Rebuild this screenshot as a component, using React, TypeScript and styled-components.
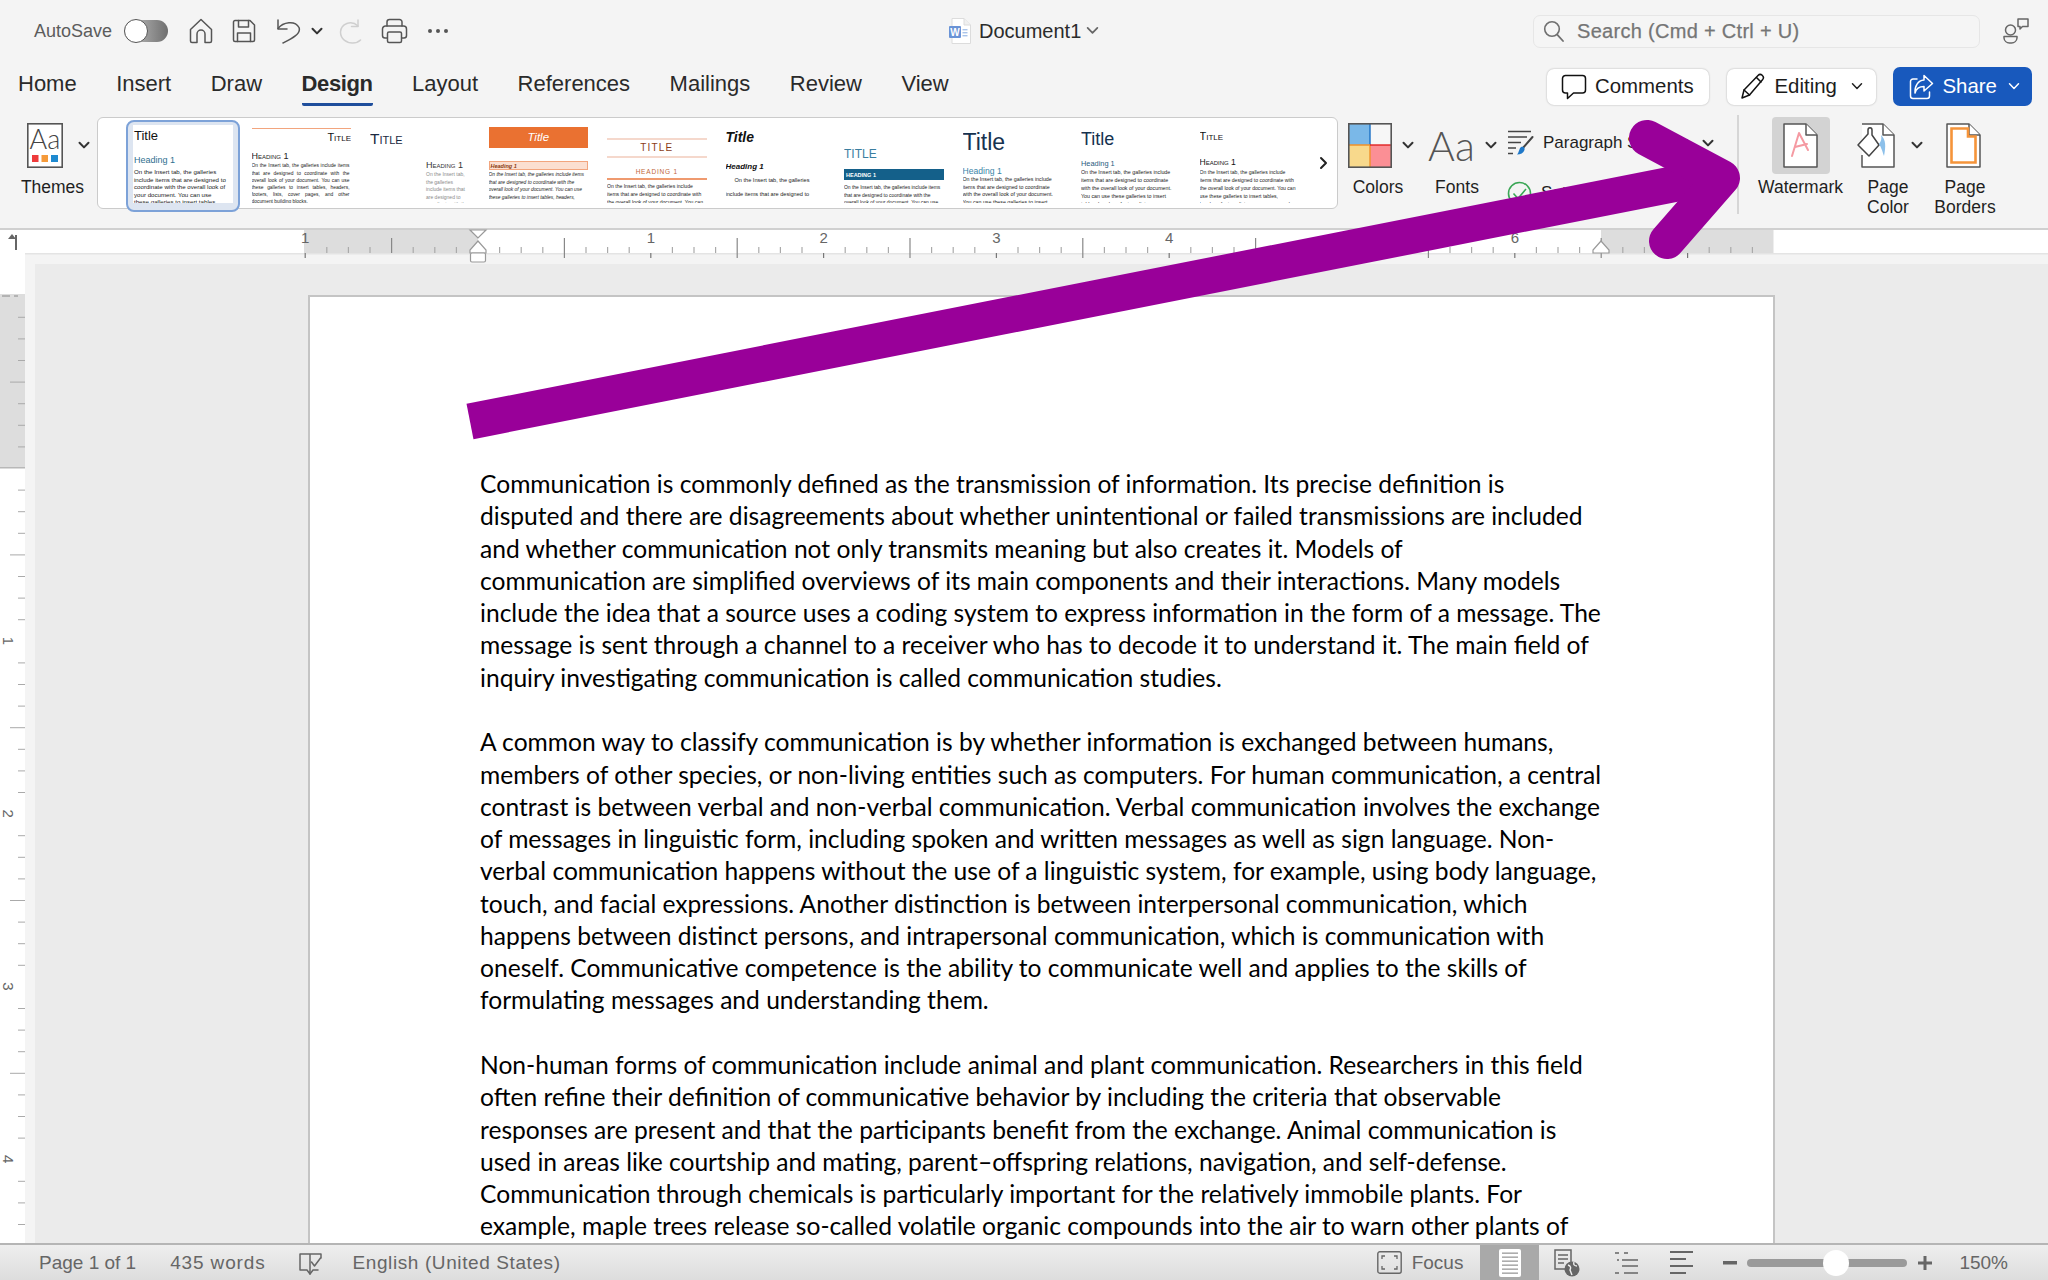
import React from "react";
import styled, { createGlobalStyle } from "styled-components";

const Global = createGlobalStyle`
  html, body { margin: 0; padding: 0; background: #f4f4f4; overflow: hidden; }
  * { box-sizing: border-box; }
`;

const UI = `"Liberation Sans", Arial, sans-serif`;

const App_ = styled.div`
  position: relative;
  width: 2048px;
  height: 1280px;
  overflow: hidden;
  display: flex;
  flex-direction: column;
  background: #f4f4f4;
  font-family: ${UI};
  color: #222;
`;

/* ---------- title bar ---------- */
const TitleBar = styled.header`
  height: 62px;
  flex: none;
  display: flex;
  align-items: center;
  padding: 0 0 0 34px;
`;
const QuickAccess = styled.div`
  width: 915px;
  flex: none;
  display: flex;
  align-items: center;
`;
const AutoSave = styled.span`
  font-size: 18px;
  color: #5c5c5c;
  width: 80px;
  white-space: nowrap;
`;
const Toggle = styled.span`
  width: 44px;
  height: 22px;
  margin-left: 10px;
  border-radius: 11px;
  background: linear-gradient(90deg, #c8c8c8, #6f6f6f);
  display: flex;
  align-items: center;
  flex: none;
  &::before {
    content: "";
    width: 22px;
    height: 22px;
    border-radius: 50%;
    background: #fff;
    border: 1.5px solid #555;
  }
`;
const Slot = styled.span<{ $ml: number }>`
  display: flex;
  flex: none;
  margin-left: ${(p) => p.$ml}px;
`;
const DocTitle = styled.div`
  display: flex;
  align-items: center;
  font-size: 20px;
  color: #2b2b2b;
  width: 584px;
  flex: none;
  gap: 8px;
`;
const SearchBox = styled.div`
  width: 447px;
  height: 33px;
  flex: none;
  display: flex;
  align-items: center;
  gap: 13px;
  padding-left: 9px;
  border: 1px solid #e6e6e6;
  border-radius: 7px;
  background: #f5f5f5;
  font-size: 20px;
  letter-spacing: 0.3px;
  color: #757575;
  -webkit-text-stroke: 0.25px #757575;
`;
const PersonSlot = styled.span`
  display: flex;
  margin-left: 23px;
`;

/* ---------- tabs ---------- */
const TabRow = styled.nav`
  height: 50px;
  flex: none;
  display: flex;
  align-items: flex-start;
  padding: 0 16px 0 18px;
`;
const Tabs = styled.div`
  display: flex;
  gap: 39.5px;
`;
const Tab = styled.span<{ $active?: boolean }>`
  padding: 4px 0 1px;
  line-height: 36px;
  font-size: 22px;
  font-weight: ${(p) => (p.$active ? 700 : 400)};
  letter-spacing: ${(p) => (p.$active ? -0.4 : 0)}px;
  color: #2a2a2a;
  border-bottom: 3px solid ${(p) => (p.$active ? "#1f4e9c" : "transparent")};
  border-radius: 0 0 2px 2px;
`;
const Actions = styled.div`
  margin-left: auto;
  display: flex;
  align-items: center;
  gap: 17.5px;
  padding-top: 5px;
`;
const ActionButton = styled.button<{ $w: number; $primary?: boolean }>`
  width: ${(p) => p.$w}px;
  height: ${(p) => (p.$primary ? 39 : 36)}px;
  display: flex;
  align-items: center;
  gap: 8.5px;
  padding: 0 0 0 ${(p) => (p.$primary ? 16 : 13.5)}px;
  border: none;
  border-radius: 7px;
  font: 20.4px ${UI};
  white-space: nowrap;
  color: ${(p) => (p.$primary ? "#fff" : "#1c1c1c")};
  background: ${(p) => (p.$primary ? "#1859bd" : "#fff")};
  box-shadow: ${(p) => (p.$primary ? "none" : "0 0 2px rgba(0,0,0,.3)")};
  svg { flex: none; }
`;

/* ---------- ribbon ---------- */
const Ribbon = styled.section`
  height: 116px;
  flex: none;
  display: flex;
  align-items: flex-start;
  padding-left: 20px;
`;
const RibbonItem = styled.div<{ $w: number; $ml?: number }>`
  width: ${(p) => p.$w}px;
  margin-left: ${(p) => p.$ml ?? 0}px;
  flex: none;
  display: flex;
  flex-direction: column;
  align-items: center;
`;
const IconRow = styled.div<{ $pad?: number; $selected?: boolean }>`
  align-self: ${(p) => (p.$selected ? "center" : "stretch")};
  width: ${(p) => (p.$selected ? "58px" : "auto")};
  height: 57px;
  margin-top: 5px;
  padding-left: ${(p) => p.$pad ?? 0}px;
  display: flex;
  align-items: center;
  justify-content: ${(p) => (p.$selected ? "center" : "flex-start")};
  border-radius: 4px;
  background: ${(p) => (p.$selected ? "#d3d3d3" : "transparent")};
  svg { flex: none; }
`;
const Label = styled.div`
  margin-top: 4px;
  font-size: 17.5px;
  line-height: 19.5px;
  text-align: center;
  color: #1f1f1f;
  white-space: nowrap;
`;
const Chev = styled.span<{ $ml: number }>`
  display: flex;
  margin-left: ${(p) => p.$ml}px;
  flex: none;
`;
const FontsGlyph = styled.span`
  font-family: "Lato", sans-serif;
  font-weight: 300;
  font-size: 41px;
  line-height: 50px;
  color: #555;
  flex: none;
`;
const ParaGroup = styled.div`
  width: 220px;
  margin-left: 20px;
  margin-right: 10px;
  flex: none;
  padding-top: 18px;
  display: flex;
  flex-direction: column;
  gap: 24px;
`;
const ParaRow = styled.div`
  height: 26px;
  display: flex;
  align-items: center;
  gap: 9px;
  font-size: 17px;
  color: #1f1f1f;
  white-space: nowrap;
  svg { flex: none; }
`;
const RibbonDivider = styled.div`
  width: 2px;
  height: 99px;
  margin-top: 3px;
  flex: none;
  background: #d6d6d6;
`;

/* ---------- style gallery ---------- */
const Gallery = styled.div`
  width: 1241px;
  height: 92px;
  margin: 5px 0 0 12px;
  flex: none;
  position: relative;
  display: flex;
  gap: 19px;
  padding: 7px 0 0 35px;
  background: #fff;
  border: 1.5px solid #cbcbcb;
  border-radius: 6px;
  font-family: ${UI};
`;
const ThumbCell = styled.div<{ $selected?: boolean }>`
  position: relative;
  width: 99.5px;
  flex: none;
  &::before {
    content: ${(p) => (p.$selected ? '""' : "none")};
    position: absolute;
    inset: -5px -7px -4px -7px;
    background: #dde5f1;
    border: 2px solid #7da2d8;
    border-radius: 8px;
  }
`;
const Thumb = styled.div<{ $selected?: boolean }>`
  position: relative;
  height: 78px;
  overflow: hidden;
  background: #fff;
  padding-left: ${(p) => (p.$selected ? 1 : 0)}px;
`;
const ThumbTitle = styled.div<{
  $size: number; $lh: number; $mt: number; $color?: string; $align?: string;
  $italic?: boolean; $bold?: boolean; $caps?: boolean; $spacing?: number; $pl?: number;
}>`
  font-size: ${(p) => p.$size}px;
  line-height: ${(p) => p.$lh}px;
  margin-top: ${(p) => p.$mt}px;
  padding-left: ${(p) => p.$pl ?? 0}px;
  color: ${(p) => p.$color ?? "#111"};
  text-align: ${(p) => p.$align ?? "left"};
  font-style: ${(p) => (p.$italic ? "italic" : "normal")};
  font-weight: ${(p) => (p.$bold ? 700 : 400)};
  font-variant: ${(p) => (p.$caps ? "small-caps" : "normal")};
  letter-spacing: ${(p) => p.$spacing ?? 0}px;
  white-space: nowrap;
`;
const ThumbBody = styled.div<{
  $size?: number; $lh: number; $mt: number; $color?: string; $italic?: boolean;
  $justify?: boolean; $pl?: number; $indent?: number; $w?: number;
}>`
  font-size: ${(p) => p.$size ?? 5.5}px;
  line-height: ${(p) => p.$lh}px;
  margin-top: ${(p) => p.$mt}px;
  margin-left: ${(p) => p.$pl ?? 0}px;
  width: ${(p) => p.$w ?? 98}px;
  color: ${(p) => p.$color ?? "#222"};
  font-style: ${(p) => (p.$italic ? "italic" : "normal")};
  text-align: ${(p) => (p.$justify ? "justify" : "left")};
  text-indent: ${(p) => p.$indent ?? 0}px;
`;
const ThumbRule = styled.div<{ $mt: number; $h: number; $color: string }>`
  margin-top: ${(p) => p.$mt}px;
  height: ${(p) => p.$h}px;
  background: ${(p) => p.$color};
`;
const TitleBanner = styled.div`
  margin-top: 2px;
  height: 21px;
  background: #ea7131;
  color: #fff;
  font-size: 11.5px;
  font-style: italic;
  line-height: 21px;
  text-align: center;
`;
const HeadBanner = styled.div<{ $mt: number; $h: number; $bg: string; $fg: string; $border?: string; $italic?: boolean }>`
  margin-top: ${(p) => p.$mt}px;
  height: ${(p) => p.$h}px;
  line-height: ${(p) => p.$h - 1}px;
  background: ${(p) => p.$bg};
  color: ${(p) => p.$fg};
  border: 1px solid ${(p) => p.$border ?? p.$bg};
  font-size: 5.5px;
  font-weight: 700;
  font-style: ${(p) => (p.$italic ? "italic" : "normal")};
  padding-left: 1px;
  white-space: nowrap;
`;
const GalleryNext = styled.span`
  position: absolute;
  right: 9px;
  top: 38px;
  display: flex;
`;

/* ---------- ruler + workspace ---------- */
const RulerRow = styled.div`
  height: 36px;
  flex: none;
  display: flex;
  background: #f4f4f4;
`;
const RulerCorner = styled.div`
  width: 25px;
  height: 36px;
  flex: none;
  background: #fff;
  border-top: 2px solid #d0d0d0;
  display: flex;
  justify-content: center;
  padding-top: 3px;
`;
const Workspace = styled.main`
  flex: 1;
  min-height: 0;
  display: flex;
  overflow: hidden;
`;
const VRuler = styled.div`
  width: 25px;
  flex: none;
  background: #fff;
  display: flex;
`;
const Gutter = styled.div`
  width: 10px;
  flex: none;
  background: #f4f4f4;
`;
const DocArea = styled.div`
  flex: 1;
  background: #ebebeb;
  padding: 31px 0 0 273px;
  overflow: hidden;
`;
const Page = styled.article`
  width: 1467px;
  min-height: 1400px;
  background: #fff;
  border: 2px solid #c4c4c4;
  padding: 171px 0 0 170px;
  font-family: "Lato", sans-serif;
  font-size: 24.6px;
  color: #000;
`;
const Para = styled.p`
  margin: 0 0 32.28px;
`;
const TextLine = styled.span`
  display: block;
  line-height: 32.28px;
  white-space: nowrap;
`;

/* ---------- status bar ---------- */
const StatusBar = styled.footer`
  height: 37px;
  flex: none;
  display: flex;
  align-items: stretch;
  background: linear-gradient(#eeeeee, #dddddd);
  border-top: 2px solid #b5b5b5;
  font-size: 19px;
  color: #666;
  padding-left: 39px;
`;
const StatusText = styled.span<{ $ml?: number; $ls?: number }>`
  margin-left: ${(p) => p.$ml ?? 0}px;
  letter-spacing: ${(p) => p.$ls ?? 0}px;
  align-self: center;
  white-space: nowrap;
  flex: none;
`;
const StatusIcon = styled.span<{ $ml: number }>`
  margin-left: ${(p) => p.$ml}px;
  align-self: center;
  display: flex;
  flex: none;
`;
const ViewTab = styled.span`
  width: 59px;
  margin-left: 17px;
  flex: none;
  background: #a9a9a9;
  display: flex;
  align-items: center;
  justify-content: center;
`;
const ZoomTrack = styled.span`
  position: relative;
  width: 160px;
  height: 8px;
  margin-left: 10px;
  align-self: center;
  flex: none;
  border-radius: 4px;
  background: #9a9a9a;
`;
const ZoomKnob = styled.span`
  position: absolute;
  left: 76px;
  top: -9px;
  width: 26px;
  height: 26px;
  border-radius: 50%;
  background: #fff;
`;

const ArrowLayer = styled.svg`
  position: absolute;
  left: 0;
  top: 0;
  pointer-events: none;
`;

/* ---------- icons ---------- */
const Chevron = ({ size = 12, color = "#333", w = 2 }: { size?: number; color?: string; w?: number }) => (
  <svg width={size} height={size * 0.7} viewBox="0 0 12 8">
    <polyline points="1.5,1.5 6,6.2 10.5,1.5" fill="none" stroke={color} strokeWidth={w} strokeLinecap="round" strokeLinejoin="round" />
  </svg>
);
const S = { fill: "none", stroke: "#555", strokeWidth: 1.5, strokeLinejoin: "round" as const, strokeLinecap: "round" as const };

const HomeIcon = () => (
  <svg width="24" height="26" viewBox="0 0 24 26">
    <path d="M1.5 11.5 12 1.5 22.5 11.5V23a1.5 1.5 0 0 1-1.5 1.5H16V16a4 4 0 0 0-8 0v8.5H3A1.5 1.5 0 0 1 1.5 23Z" {...S} />
  </svg>
);
const SaveIcon = () => (
  <svg width="24" height="24" viewBox="0 0 24 24">
    <path d="M3 1.5H18L22.5 6V21a1.5 1.5 0 0 1-1.5 1.5H3A1.5 1.5 0 0 1 1.5 21V3A1.5 1.5 0 0 1 3 1.5Z" {...S} />
    <path d="M6.5 1.5V8H16.5V1.5M5.5 22.5V14H18.5V22.5" {...S} />
  </svg>
);
const UndoIcon = () => (
  <svg width="26" height="26" viewBox="0 0 26 26">
    <path d="M2 2V11H11" {...S} />
    <path d="M2 10.5C7 4 19 2 23 9.5 25.5 16 15 21 7 25" {...S} />
  </svg>
);
const RedoIcon = () => (
  <svg width="24" height="26" viewBox="0 0 24 26">
    <path d="M19 2V8.5H12.5" {...S} stroke="#cfcfcf" />
    <path d="M19 8C12 1.5 2 6 1.5 14c0 7 6 11 12 11 3 0 6-1 8-3" {...S} stroke="#cfcfcf" />
  </svg>
);
const PrintIcon = () => (
  <svg width="27" height="26" viewBox="0 0 27 26">
    <path d="M6 8V4a2.5 2.5 0 0 1 2.5-2.5h10A2.5 2.5 0 0 1 21 4V8" {...S} />
    <path d="M6 20H4a2.5 2.5 0 0 1-2.5-2.5V11A3 3 0 0 1 4.5 8h18a3 3 0 0 1 3 3v6.5A2.5 2.5 0 0 1 23 20H21" {...S} />
    <rect x="6.5" y="14" width="14" height="10.5" rx="1.5" {...S} />
  </svg>
);
const DotsIcon = () => (
  <svg width="22" height="6" viewBox="0 0 22 6">
    <circle cx="3" cy="3" r="2" fill="#555" />
    <circle cx="11" cy="3" r="2" fill="#555" />
    <circle cx="19" cy="3" r="2" fill="#555" />
  </svg>
);
const WordIcon = () => (
  <svg width="22" height="26" viewBox="0 0 22 26">
    <path d="M3 .5H15L21.5 7V25.5H3Z" fill="#fff" stroke="#dcdcdc" />
    <path d="M15 .5V7H21.5" fill="#f0f0f0" stroke="#dcdcdc" />
    <rect x="0" y="8" width="12" height="12" rx="1" fill="#6a93d6" />
    <rect x="13.5" y="11" width="5" height="1.4" fill="#a9c4ea" />
    <rect x="13.5" y="14" width="5" height="1.4" fill="#a9c4ea" />
    <rect x="13.5" y="17" width="5" height="1.4" fill="#a9c4ea" />
    <text x="6" y="17.7" textAnchor="middle" fontFamily="Liberation Sans" fontSize="10" fontWeight="700" fill="#fff">W</text>
  </svg>
);
const SearchIcon = () => (
  <svg width="21" height="22" viewBox="0 0 21 22">
    <circle cx="9" cy="9" r="7.3" fill="none" stroke="#707070" strokeWidth="1.6" />
    <path d="M14.2 14.6 20 21" stroke="#707070" strokeWidth="1.8" strokeLinecap="round" />
  </svg>
);
const PersonIcon = () => (
  <svg width="26" height="26" viewBox="0 0 26 26">
    <circle cx="7.5" cy="12" r="5" {...S} stroke="#666" />
    <path d="M1 18.5H14V20a5.5 5.5 0 0 1-5.5 5H6.5A5.5 5.5 0 0 1 1 20Z" {...S} stroke="#666" />
    <path d="M15 1H25V8.5H19.5L17 11V8.5H15Z" {...S} stroke="#666" />
  </svg>
);
const CommentIcon = () => (
  <svg width="26" height="26" viewBox="0 0 26 26">
    <path d="M4.5 1.5H21.5a3 3 0 0 1 3 3V16a3 3 0 0 1-3 3H12.5L6.5 24.5V19H4.5a3 3 0 0 1-3-3V4.5a3 3 0 0 1 3-3Z" {...S} stroke="#111" />
  </svg>
);
const PencilIcon = () => (
  <svg width="26" height="27" viewBox="0 0 26 27">
    <path d="M2 25 4 17 18 2.5a3 3 0 0 1 4.2-.2 3.2 3.2 0 0 1 .3 4.5L9.5 22Z" {...S} stroke="#111" />
    <path d="M16.5 4.5 21 9M4 17 9.5 22" {...S} stroke="#111" />
  </svg>
);
const ShareIcon = () => (
  <svg width="25" height="26" viewBox="0 0 25 26">
    <path d="M8 5H4A2.5 2.5 0 0 0 1.5 7.5V22A2.5 2.5 0 0 0 4 24.5H18A2.5 2.5 0 0 0 20.5 22V18" {...S} stroke="#fff" />
    <path d="M15 1.5 23.5 9.5 15 17V12.5C10 12.5 7 15 6 19 5.5 12 9 6.5 15 6Z" {...S} stroke="#fff" />
  </svg>
);
const ThemesIcon = () => (
  <svg width="36" height="45" viewBox="0 0 36 45">
    <rect x=".8" y=".8" width="34.4" height="43.4" fill="#fff" stroke="#555" strokeWidth="1.6" />
    <text x="18" y="26" textAnchor="middle" fontFamily="Lato" fontWeight="300" fontSize="27" fill="#444">Aa</text>
    <rect x="5" y="32" width="6.5" height="7" fill="#ee3b3b" />
    <rect x="14.5" y="32" width="6.5" height="7" fill="#f59a3a" />
    <rect x="24" y="32" width="7" height="7" fill="#1f8ad0" />
  </svg>
);
const ColorsIcon = () => (
  <svg width="44" height="45" viewBox="0 0 44 45">
    <rect x="1" y="1" width="21" height="21" fill="#7ab8e8" />
    <rect x="22" y="1" width="21" height="21" fill="#f7f7f7" />
    <rect x="1" y="22" width="21" height="22" fill="#f8d98c" />
    <rect x="22" y="22" width="21" height="22" fill="#fb8f95" />
    <path d="M22 1V22" stroke="#1a6fc4" strokeWidth="1.4" />
    <path d="M22 22V44M1 22H22" stroke="#f0912a" strokeWidth="1.4" />
    <path d="M22 22H43" stroke="#e02222" strokeWidth="1.4" />
    <rect x=".8" y=".8" width="42.4" height="43.4" fill="none" stroke="#555" strokeWidth="1.6" />
  </svg>
);
const ParaIcon = () => (
  <svg width="27" height="26" viewBox="0 0 27 26">
    <path d="M1 1.5H24M1 7H20M1 12.5H14M1 18H9M1 23.5H6" stroke="#444" strokeWidth="1.4" />
    <path d="M25.5 7 15 19" stroke="#444" strokeWidth="2" strokeLinecap="round" />
    <path d="M14 17c3-1 4 1 3.5 3-1 3-4 4.5-7.5 4.5 2-1.500 2-6 4-7.500Z" fill="#1f78c8" />
  </svg>
);
const CheckCircle = () => (
  <svg width="25" height="25" viewBox="0 0 25 25">
    <circle cx="12.500" cy="12.500" r="11" fill="none" stroke="#3aa655" strokeWidth="1.6" />
    <path d="M6.500 12.500 11 17.500 19 8" fill="none" stroke="#3aa655" strokeWidth="1.6" />
  </svg>
);
const DocShape = ({ children }: { children?: React.ReactNode }) => (
  <svg width="35" height="45" viewBox="0 0 35 45">
    <path d="M1 1H23L34 12V44H1Z" fill="#fff" stroke="#555" strokeWidth="1.5" strokeLinejoin="round" />
    <path d="M23 1V12H34" fill="#fff" stroke="#555" strokeWidth="1.5" strokeLinejoin="round" />
    {children}
  </svg>
);
const WatermarkIcon = () => (
  <DocShape>
    <path d="M9 33 16 10 25 27M12 24 24 21" fill="none" stroke="#f59aa2" strokeWidth="2" strokeLinecap="round" strokeLinejoin="round" />
  </DocShape>
);
const PageColorIcon = () => (
  <svg width="38" height="45" viewBox="0 0 38 45">
    <path d="M5 1H26L37 12V44H5V32" fill="#fff" stroke="#555" strokeWidth="1.5" strokeLinejoin="round" />
    <path d="M26 1V12H37" fill="#fff" stroke="#555" strokeWidth="1.5" strokeLinejoin="round" />
    <path d="M1 22 11 11V7c0-3 4-3 4 0v5l7 10-10 11Z" fill="#fff" stroke="#444" strokeWidth="1.5" strokeLinejoin="round" />
    <path d="M24 12c5 5 5 11 3 21-2-6-3-9-5-12 2-3 3-5 2-9Z" fill="#8cc0ea" />
  </svg>
);
const PageBordersIcon = () => (
  <DocShape>
    <path d="M5.500 5.500H22V13.500H29.500V39.500H5.500Z" fill="none" stroke="#f5943a" strokeWidth="2.600" />
  </DocShape>
);
const TabStopIcon = () => (
  <svg width="12" height="18" viewBox="0 0 12 18">
    <path d="M9 2V17" stroke="#666" strokeWidth="2" />
    <path d="M9 6H1L5 1Z" fill="#666" />
  </svg>
);
const BookIcon = () => (
  <svg width="25" height="24" viewBox="0 0 25 24">
    <path d="M12 3H2V19H9L12 23V3ZM12 3H23V7" {...S} stroke="#666" />
    <path d="M12 23 15 19H20M13.500 11l3 4 6-8" {...S} stroke="#666" />
  </svg>
);
const FocusIcon = () => (
  <svg width="25" height="23" viewBox="0 0 25 23">
    <rect x=".8" y=".8" width="23.4" height="21.4" rx="2" fill="none" stroke="#666" strokeWidth="1.4" />
    <path d="M5 8V5H8M17 5H20V8M5 15V18H8M17 18H20V15" fill="none" stroke="#666" strokeWidth="1.3" />
  </svg>
);
const PrintLayoutIcon = () => (
  <svg width="22" height="28" viewBox="0 0 22 28">
    <rect width="22" height="28" rx="2" fill="#fff" />
    {[4, 8, 12, 16, 20, 24].map((y) => (
      <rect key={y} x="3" y={y - 0.5} width="16" height="1.3" fill="#999" />
    ))}
  </svg>
);
const WebLayoutIcon = () => (
  <svg width="26" height="28" viewBox="0 0 26 28">
    <path d="M1 1H17V20H1Z" fill="none" stroke="#666" strokeWidth="1.5" />
    <path d="M4 6H14M4 10H14M4 14H10" stroke="#666" strokeWidth="1.5" />
    <circle cx="18" cy="20" r="7.500" fill="#666" />
    <path d="M14 16c3 1 3 3 2 5l2 5M20 13c-1 3 1 4 3 4" stroke="#eee" strokeWidth="1.4" fill="none" />
  </svg>
);
const OutlineIcon = () => (
  <svg width="25" height="25" viewBox="0 0 25 25">
    <path d="M1 3H5M10 3H14M8 10H24M3 10H5M8 16H24M1 23H5M10 23H24" stroke="#666" strokeWidth="1.600" strokeDasharray="none" />
  </svg>
);
const DraftIcon = () => (
  <svg width="23" height="25" viewBox="0 0 23 25">
    <path d="M0 2H23M0 9H16M0 16H23M0 23H16" stroke="#666" strokeWidth="1.800" />
  </svg>
);
const MinusIcon = () => (
  <svg width="14" height="4" viewBox="0 0 14 4"><rect width="14" height="3.500" fill="#666" /></svg>
);
const PlusIcon = () => (
  <svg width="14" height="14" viewBox="0 0 14 14"><path d="M7 0V14M0 7H14" stroke="#666" strokeWidth="3" /></svg>
);

/* ---------- rulers ---------- */
const INCH = 172.8;
const ORIGIN = 478;
const EIGHTH = INCH / 8;

const HRuler = () => {
  const ticks: React.ReactNode[] = [];
  for (let k = -8; k < 60; k++) {
    const x = ORIGIN + k * EIGHTH;
    if (x > 1773 || k === 0) continue;
    if (k % 8 === 0) {
      ticks.push(<path key={k} d={`M${x} 253V258`} stroke="#777" strokeWidth="1.2" />);
      ticks.push(
        <text key={`n${k}`} x={x} y={243} textAnchor="middle" fontFamily="Liberation Sans" fontSize="15" fill="#666">
          {Math.abs(k / 8)}
        </text>
      );
    } else if (k % 4 === 0) {
      ticks.push(<path key={k} d={`M${x} 238V${k > 0 ? 258 : 253}`} stroke="#888" strokeWidth="1.2" />);
    } else {
      ticks.push(<path key={k} d={`M${x} 247V253`} stroke="#aaa" strokeWidth="1.2" />);
    }
  }
  return (
    <svg width="2023" height="36" viewBox="25 228 2023 36">
      <rect x="25" y="230" width="2023" height="23" fill="#fff" />
      <rect x="25" y="228" width="2023" height="2" fill="#d0d0d0" />
      <rect x="25" y="253" width="2023" height="1.500" fill="#e4e4e4" />
      <rect x="304" y="230" width="174" height="23" fill="#dddddd" />
      <rect x="1601" y="230" width="172.500" height="23" fill="#dddddd" />
      {ticks}
      <path d="M470 230H486L478 238Z" fill="#fff" stroke="#999" strokeWidth="1.200" />
      <path d="M478 241 486 250V253H470V250Z" fill="#fff" stroke="#999" strokeWidth="1.200" />
      <rect x="470.500" y="253" width="15" height="9" rx="1.500" fill="#fff" stroke="#999" strokeWidth="1.200" />
      <path d="M1601 241 1609 250V253H1593V250Z" fill="#fff" stroke="#999" strokeWidth="1.200" />
    </svg>
  );
};

const VerticalRuler = () => {
  const ticks: React.ReactNode[] = [];
  for (let k = -8; k < 50; k++) {
    const y = 468 + k * EIGHTH;
    if (k === 0 || k === -8) continue;
    if (k % 8 === 0) {
      ticks.push(
        <text key={k} x={0} y={0} transform={`translate(3 ${y}) rotate(90)`} textAnchor="middle" fontFamily="Liberation Sans" fontSize="15" fill="#666">
          {k / 8}
        </text>
      );
    } else if (k % 4 === 0) {
      ticks.push(<rect key={k} x="10" y={y} width="15" height="1" fill="#aaa" />);
    } else {
      ticks.push(<rect key={k} x="18" y={y} width="7" height="1" fill="#aaa" />);
    }
  }
  return (
    <svg width="25" height="979" viewBox="0 264 25 979">
      <rect x="0" y="294" width="25" height="174" fill="#dddddd" />
      <rect x="0" y="467" width="25" height="1.500" fill="#b8b8b8" />
      <path d="M2 296H10M14 296H18" stroke="#888" strokeWidth="1" />
      {ticks}
    </svg>
  );
};

/* ---------- content ---------- */
const BODY =
  "On the Insert tab, the galleries include items that are designed to coordinate with the overall look of your document. You can use these galleries to insert tables, headers, footers, lists, cover pages, and other document building blocks.";

const PARAS = [
  [
    "Communication is commonly defined as the transmission of information. Its precise definition is",
    "disputed and there are disagreements about whether unintentional or failed transmissions are included",
    "and whether communication not only transmits meaning but also creates it. Models of",
    "communication are simplified overviews of its main components and their interactions. Many models",
    "include the idea that a source uses a coding system to express information in the form of a message. The",
    "message is sent through a channel to a receiver who has to decode it to understand it. The main field of",
    "inquiry investigating communication is called communication studies.",
  ],
  [
    "A common way to classify communication is by whether information is exchanged between humans,",
    "members of other species, or non-living entities such as computers. For human communication, a central",
    "contrast is between verbal and non-verbal communication. Verbal communication involves the exchange",
    "of messages in linguistic form, including spoken and written messages as well as sign language. Non-",
    "verbal communication happens without the use of a linguistic system, for example, using body language,",
    "touch, and facial expressions. Another distinction is between interpersonal communication, which",
    "happens between distinct persons, and intrapersonal communication, which is communication with",
    "oneself. Communicative competence is the ability to communicate well and applies to the skills of",
    "formulating messages and understanding them.",
  ],
  [
    "Non-human forms of communication include animal and plant communication. Researchers in this field",
    "often refine their definition of communicative behavior by including the criteria that observable",
    "responses are present and that the participants benefit from the exchange. Animal communication is",
    "used in areas like courtship and mating, parent–offspring relations, navigation, and self-defense.",
    "Communication through chemicals is particularly important for the relatively immobile plants. For",
    "example, maple trees release so-called volatile organic compounds into the air to warn other plants of",
  ],
];

const TABS = ["Home", "Insert", "Draw", "Design", "Layout", "References", "Mailings", "Review", "View"];

const NAVY = "#16324f";

export default function App() {
  return (
    <App_>
      <Global />
      <TitleBar>
        <QuickAccess>
          <AutoSave>AutoSave</AutoSave>
          <Toggle />
          <Slot $ml={21}><HomeIcon /></Slot>
          <Slot $ml={19}><SaveIcon /></Slot>
          <Slot $ml={20}><UndoIcon /></Slot>
          <Slot $ml={9}><Chevron /></Slot>
          <Slot $ml={16}><RedoIcon /></Slot>
          <Slot $ml={18}><PrintIcon /></Slot>
          <Slot $ml={19}><DotsIcon /></Slot>
        </QuickAccess>
        <DocTitle>
          <WordIcon />
          Document1
          <Chev $ml={-3}><Chevron size={13} color="#666" w={1.6} /></Chev>
        </DocTitle>
        <SearchBox>
          <SearchIcon />
          Search (Cmd + Ctrl + U)
        </SearchBox>
        <PersonSlot><PersonIcon /></PersonSlot>
      </TitleBar>

      <TabRow>
        <Tabs>
          {TABS.map((t) => (
            <Tab key={t} $active={t === "Design"}>{t}</Tab>
          ))}
        </Tabs>
        <Actions>
          <ActionButton $w={162}><CommentIcon />Comments</ActionButton>
          <ActionButton $w={149}><PencilIcon />Editing<Chev $ml={6}><Chevron size={12} color="#222" w={1.5} /></Chev></ActionButton>
          <ActionButton $w={139} $primary><ShareIcon />Share<Chev $ml={3}><Chevron size={12} color="#fff" w={1.5} /></Chev></ActionButton>
        </Actions>
      </TabRow>

      <Ribbon>
        <RibbonItem $w={65}>
          <IconRow $pad={7}>
            <ThemesIcon />
            <Chev $ml={15}><Chevron size={12} color="#333" /></Chev>
          </IconRow>
          <Label>Themes</Label>
        </RibbonItem>

        <Gallery>
          <ThumbCell $selected>
            <Thumb $selected>
              <ThumbTitle $size={13} $lh={16} $mt={3}>Title</ThumbTitle>
              <ThumbTitle $size={9} $lh={12} $mt={10} $color="#2f6f8f">Heading 1</ThumbTitle>
              <ThumbBody $lh={7.6} $mt={2} $size={6.15} $w={93}>{BODY}</ThumbBody>
            </Thumb>
          </ThumbCell>
          <ThumbCell>
            <Thumb>
              <ThumbRule $mt={3} $h={1} $color="#f2a57e" />
              <ThumbTitle $size={11} $lh={12} $mt={2} $align="right" $caps>Title</ThumbTitle>
              <ThumbTitle $size={9} $lh={10} $mt={8} $caps $color="#222">Heading 1</ThumbTitle>
              <ThumbBody $lh={7.2} $mt={1.4} $size={4.9} $justify>{BODY}</ThumbBody>
            </Thumb>
          </ThumbCell>
          <ThumbCell>
            <Thumb>
              <ThumbTitle $size={15.5} $lh={20} $mt={4} $caps $color="#1b2a41">Title</ThumbTitle>
              <ThumbTitle $size={9} $lh={10} $mt={11} $caps $pl={56} $color="#333">Heading 1</ThumbTitle>
              <ThumbBody $lh={7.5} $mt={1.3} $size={5} $pl={56} $w={42} $color="#8a8a8a">{BODY}</ThumbBody>
            </Thumb>
          </ThumbCell>
          <ThumbCell>
            <Thumb>
              <TitleBanner>Title</TitleBanner>
              <HeadBanner $mt={13} $h={9} $bg="#fbdfd1" $fg="#8a3a10" $border="#f2a57e" $italic>Heading 1</HeadBanner>
              <ThumbBody $lh={7.6} $mt={1.2} $size={4.9} $italic>{BODY}</ThumbBody>
            </Thumb>
          </ThumbCell>
          <ThumbCell>
            <Thumb>
              <ThumbRule $mt={13} $h={2} $color="#f5d8cc" />
              <ThumbTitle $size={10} $lh={14} $mt={1} $align="center" $spacing={1.2} $color="#8a3d17">TITLE</ThumbTitle>
              <ThumbRule $mt={1} $h={2} $color="#f5d8cc" />
              <ThumbTitle $size={6.5} $lh={10} $mt={9} $align="center" $spacing={0.8} $color="#c0663a">HEADING 1</ThumbTitle>
              <ThumbRule $mt={0.5} $h={2} $color="#ef9a6f" />
              <ThumbBody $lh={7.7} $mt={3.7} $size={5.1}>{BODY}</ThumbBody>
            </Thumb>
          </ThumbCell>
          <ThumbCell>
            <Thumb>
              <ThumbTitle $size={14} $lh={16} $mt={4} $bold $italic>Title</ThumbTitle>
              <ThumbTitle $size={8} $lh={10} $mt={17} $bold $italic>Heading 1</ThumbTitle>
              <ThumbBody $lh={14} $mt={1} $size={5.6} $indent={9} $w={90}>{BODY}</ThumbBody>
            </Thumb>
          </ThumbCell>
          <ThumbCell>
            <Thumb>
              <ThumbTitle $size={12} $lh={14} $mt={22} $color="#3a7ea0">TITLE</ThumbTitle>
              <HeadBanner $mt={8} $h={11} $bg="#14608a" $fg="#fff">HEADING 1</HeadBanner>
              <ThumbBody $lh={7.4} $mt={4.3} $size={4.95}>{BODY}</ThumbBody>
            </Thumb>
          </ThumbCell>
          <ThumbCell>
            <Thumb>
              <ThumbTitle $size={23} $lh={28} $mt={3} $color={NAVY}>Title</ThumbTitle>
              <ThumbTitle $size={8.6} $lh={10} $mt={10} $color="#3a85a8">Heading 1</ThumbTitle>
              <ThumbBody $lh={7.6} $mt={0} $size={5.3} $w={92}>{BODY}</ThumbBody>
            </Thumb>
          </ThumbCell>
          <ThumbCell>
            <Thumb>
              <ThumbTitle $size={18} $lh={20} $mt={4} $color={NAVY}>Title</ThumbTitle>
              <ThumbTitle $size={7.4} $lh={9} $mt={9.5} $color="#2a5c80">Heading 1</ThumbTitle>
              <ThumbBody $lh={8} $mt={0.5} $size={5.3} $w={95}>{BODY}</ThumbBody>
            </Thumb>
          </ThumbCell>
          <ThumbCell>
            <Thumb>
              <ThumbTitle $size={11} $lh={12} $mt={5} $caps>Title</ThumbTitle>
              <ThumbTitle $size={8.6} $lh={10} $mt={15} $caps>Heading 1</ThumbTitle>
              <ThumbBody $lh={8} $mt={1} $size={5.1} $w={98}>{BODY}</ThumbBody>
            </Thumb>
          </ThumbCell>
          <GalleryNext>
            <svg width="9" height="14" viewBox="0 0 9 14">
              <polyline points="2,2 7,7 2,12" fill="none" stroke="#222" strokeWidth="2" strokeLinecap="round" strokeLinejoin="round" />
            </svg>
          </GalleryNext>
        </Gallery>

        <RibbonItem $w={60} $ml={10}>
          <IconRow>
            <ColorsIcon />
            <Chev $ml={10}><Chevron /></Chev>
          </IconRow>
          <Label>Colors</Label>
        </RibbonItem>
        <RibbonItem $w={60} $ml={19}>
          <IconRow $pad={1}>
            <FontsGlyph>Aa</FontsGlyph>
            <Chev $ml={10}><Chevron /></Chev>
          </IconRow>
          <Label>Fonts</Label>
        </RibbonItem>

        <ParaGroup>
          <ParaRow>
            <ParaIcon />
            Paragraph Spacing
            <Chev $ml={4}><Chevron /></Chev>
          </ParaRow>
          <ParaRow>
            <CheckCircle />
            Set as Default
          </ParaRow>
        </ParaGroup>
        <RibbonDivider />

        <RibbonItem $w={79} $ml={22}>
          <IconRow $selected><WatermarkIcon /></IconRow>
          <Label>Watermark</Label>
        </RibbonItem>
        <RibbonItem $w={62} $ml={17}>
          <IconRow>
            <PageColorIcon />
            <Chev $ml={16}><Chevron /></Chev>
          </IconRow>
          <Label>Page<br />Color</Label>
        </RibbonItem>
        <RibbonItem $w={66} $ml={13}>
          <IconRow $pad={14}><PageBordersIcon /></IconRow>
          <Label>Page<br />Borders</Label>
        </RibbonItem>
      </Ribbon>

      <RulerRow>
        <RulerCorner><TabStopIcon /></RulerCorner>
        <HRuler />
      </RulerRow>

      <Workspace>
        <VRuler><VerticalRuler /></VRuler>
        <Gutter />
        <DocArea>
          <Page>
            {PARAS.map((lines, i) => (
              <Para key={i}>
                {lines.map((l) => (
                  <TextLine key={l}>{l}</TextLine>
                ))}
              </Para>
            ))}
          </Page>
        </DocArea>
      </Workspace>

      <StatusBar>
        <StatusText>Page 1 of 1</StatusText>
        <StatusText $ml={34} $ls={0.85}>435 words</StatusText>
        <StatusIcon $ml={32}><BookIcon /></StatusIcon>
        <StatusText $ml={30} $ls={0.6}>English (United States)</StatusText>
        <StatusIcon $ml={816}><FocusIcon /></StatusIcon>
        <StatusText $ml={10}>Focus</StatusText>
        <ViewTab><PrintLayoutIcon /></ViewTab>
        <StatusIcon $ml={15}><WebLayoutIcon /></StatusIcon>
        <StatusIcon $ml={34}><OutlineIcon /></StatusIcon>
        <StatusIcon $ml={31}><DraftIcon /></StatusIcon>
        <StatusIcon $ml={30}><MinusIcon /></StatusIcon>
        <ZoomTrack><ZoomKnob /></ZoomTrack>
        <StatusIcon $ml={11}><PlusIcon /></StatusIcon>
        <StatusText $ml={27}>150%</StatusText>
      </StatusBar>

      <ArrowLayer width="2048" height="1280" viewBox="0 0 2048 1280">
        <path d="M470 421.500 1715 176" fill="none" stroke="#990099" strokeWidth="36" />
        <path d="M1647 138 1722 178 1667 241" fill="none" stroke="#990099" strokeWidth="36" strokeLinecap="round" strokeLinejoin="round" />
      </ArrowLayer>
    </App_>
  );
}
